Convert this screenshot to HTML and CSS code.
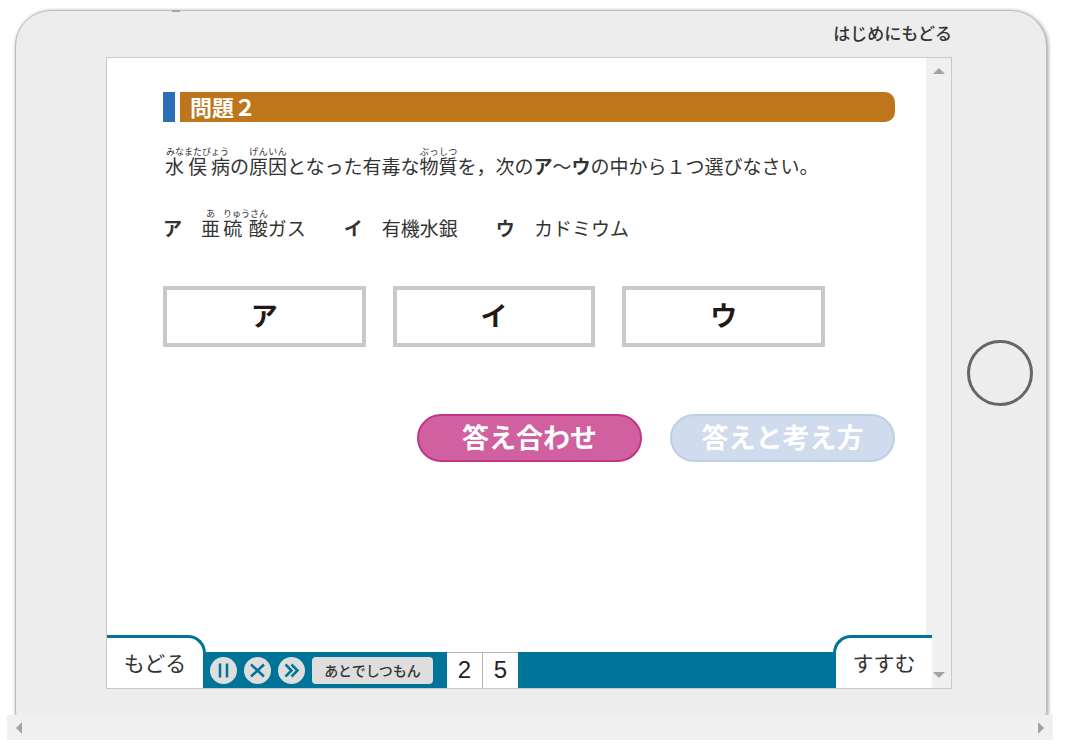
FILE: index.html
```html
<!DOCTYPE html>
<html lang="ja">
<head>
    <meta charset="UTF-8">
    <meta name="viewport" content="width=device-width, initial-scale=1.0">
    <title>問題２</title>
    <link rel="stylesheet" href="styles.css">
</head>
<body>
    <div class="viewport">
        <div class="device">
            <header class="device-head">
                <a class="home-link" href="#">はじめにもどる</a>
            </header>
            <div class="screen">
                <main class="page">
                    <h1 class="title">問題２</h1>
                    <p class="question"><ruby class="wide">水俣病<rt>みなまたびょう</rt></ruby>の<ruby>原因<rt>げんいん</rt></ruby>となった有毒な<ruby>物質<rt>ぶっしつ</rt></ruby>を，次の<b>ア</b>～<b>ウ</b>の中から１つ選びなさい。</p>
                    <p class="question"><b>ア</b>　<ruby>亜<rt>あ</rt></ruby><ruby class="wide">硫酸<rt>りゅうさん</rt></ruby>ガス　　<b>イ</b>　有機水銀　　<b>ウ</b>　カドミウム</p>
                    <div class="answers">
                        <button class="answer" type="button">ア</button>
                        <button class="answer" type="button">イ</button>
                        <button class="answer" type="button">ウ</button>
                    </div>
                    <div class="actions">
                        <button class="pill check" type="button">答え合わせ</button>
                        <button class="pill explain" type="button">答えと考え方</button>
                    </div>
                </main>
                <div class="scroll vertical">
                    <svg width="12" height="6" viewBox="0 0 12 6"><path d="M6 0L12 6H0z"/></svg>
                    <svg width="12" height="6" viewBox="0 0 12 6"><path d="M0 0H12L6 6z"/></svg>
                </div>
                <nav class="footer">
                    <button class="tab back" type="button">もどる</button>
                    <div class="toolbar">
                        <button class="round" type="button" aria-label="一時停止">
                            <svg width="27" height="27" viewBox="0 0 27 27"><path d="M10 6.5V20.5M17 6.5V20.5"/></svg>
                        </button>
                        <button class="round" type="button" aria-label="やめる">
                            <svg width="27" height="27" viewBox="0 0 27 27"><path d="M7 7.5L20 19.5M20 7.5L7 19.5"/></svg>
                        </button>
                        <button class="round" type="button" aria-label="とばす">
                            <svg width="27" height="27" viewBox="0 0 27 27"><path d="M7.500 7.5L13.5 13.5L7.500 19.5M13.500 7.5L19.5 13.5L13.500 19.5"/></svg>
                        </button>
                        <button class="later" type="button">あとでしつもん</button>
                        <div class="numbers">
                            <a class="number" href="#">2</a>
                            <a class="number" href="#">5</a>
                        </div>
                    </div>
                    <button class="tab next" type="button">すすむ</button>
                </nav>
            </div>
            <div class="device-side">
                <button class="home" type="button" aria-label="ホーム"></button>
            </div>
        </div>
    </div>
    <div class="scroll horizontal">
        <svg width="6" height="12" viewBox="0 0 6 12"><path d="M6 0V12L0 6z"/></svg>
        <svg width="6" height="12" viewBox="0 0 6 12"><path d="M0 0L6 6L0 12z"/></svg>
    </div>
</body>
</html>
```
FILE: styles.css
```css
* { box-sizing: border-box; }
body { display: flex; flex-direction: column; height: 100vh; margin: 0; padding: 8px 15px 8px 7px; background: #fff; color: #333; font-family: "Noto Sans CJK JP", sans-serif; }
button { margin: 0; padding: 0; border: none; background: none; color: inherit; font-family: inherit; cursor: pointer; }
a { color: inherit; text-decoration: none; }
svg { display: block; }

/* tablet frame */
.viewport { flex: 1; min-height: 0; padding: 2px 6px 0 8px; overflow: hidden; }
.device { position: relative; display: grid; grid-template-columns: 90px 1fr 94px; grid-template-rows: 46px 1fr 57px; height: calc(100% + 32px); border: 1px solid #bdbdbd; border-radius: 36px; background: #ededed; box-shadow: 1px 1px 4px rgba(0, 0, 0, 0.4); }
.device::before { content: ""; position: absolute; top: -1px; left: 156px; width: 8px; height: 2px; background: #a5a5a5; }
.device-head { grid-column: 2; display: flex; justify-content: flex-end; align-items: flex-start; padding-top: 10px; }
.home-link { font-size: 17px; font-weight: 500; line-height: 24px; }
.device-side { grid-column: 3; grid-row: 2; display: flex; justify-content: center; align-items: center; padding-left: 2px; }
.home { width: 66px; height: 66px; border: 3px solid #666; border-radius: 50%; }

.screen { grid-column: 2; grid-row: 2; position: relative; display: flex; border: 1px solid #c9c9c9; background: #fff; }
.page { flex: 1; padding: 34px 31px 53px 56px; }

/* scroll bars */
.scroll { display: flex; justify-content: space-between; align-items: center; background: #f0f0f0; fill: #a3a3a3; }
.vertical { flex-direction: column; width: 25px; padding: 10px 0; }
.horizontal { height: 25px; padding: 0 9px; }

/* question */
.title { position: relative; height: 30px; margin: 0 0 0 17px; padding-left: 10px; border-radius: 0 10px 10px 0; background: #bd7619; color: #fff; font-size: 22px; line-height: 28px; }
.title::before { content: ""; position: absolute; top: 0; bottom: 0; left: -17px; width: 12px; background: #2b6fba; }
.question { margin: 0; padding-top: 30px; font-size: 19px; line-height: 32px; white-space: nowrap; }
.title + .question { padding-top: 28px; }
rt { font-size: 9px; line-height: 12px; }
.wide rt { padding: 0 3px; }
.answers { display: grid; grid-template-columns: repeat(3, 1fr); gap: 27px; margin-top: 42px; padding-right: 70px; }
.answer { height: 61px; padding-bottom: 3px; border: 4px solid #c9c9c9; background: #fff; color: #231815; font-size: 27px; font-weight: 700; line-height: 40px; }
.actions { display: flex; justify-content: flex-end; gap: 28px; margin-top: 67px; }
.pill { width: 225px; height: 48px; padding-bottom: 3px; border: 2px solid; border-radius: 24px; color: #fff; font-size: 27px; font-weight: 700; line-height: 40px; }
.check { border-color: #c2348a; background: #d0609f; }
.explain { border-color: #bdd0e6; background: #d0dbed; }

/* bottom bar */
.footer { position: absolute; right: 19px; bottom: 0; left: 0; display: flex; align-items: flex-end; }
.tab { width: 99px; height: 53px; padding-bottom: 3px; border: 0 solid #007498; border-top-width: 3px; background: #fff; font-size: 21px; line-height: 30px; }
.back { border-right-width: 3px; border-radius: 0 18px 0 0; }
.next { border-left-width: 3px; border-radius: 18px 0 0 0; }
.toolbar { flex: 1; display: flex; align-items: center; gap: 7px; height: 36px; padding-left: 4px; background: #007498; }
.round { width: 27px; height: 27px; border-radius: 50%; background: #dedede; }
.round path { fill: none; stroke: #007498; stroke-width: 2.5; }
.later { width: 121px; height: 27px; border-radius: 4px; background: #dedede; font-size: 14px; font-weight: 500; line-height: 24px; }
.numbers { display: flex; gap: 1px; margin-left: 7px; border-top: 1px solid #b5b5b5; background: #b5b5b5; }
.number { width: 35px; height: 35px; background: #fff; color: #222; font-family: "Liberation Sans", Arial, sans-serif; font-size: 24px; line-height: 34px; text-align: center; }
```
